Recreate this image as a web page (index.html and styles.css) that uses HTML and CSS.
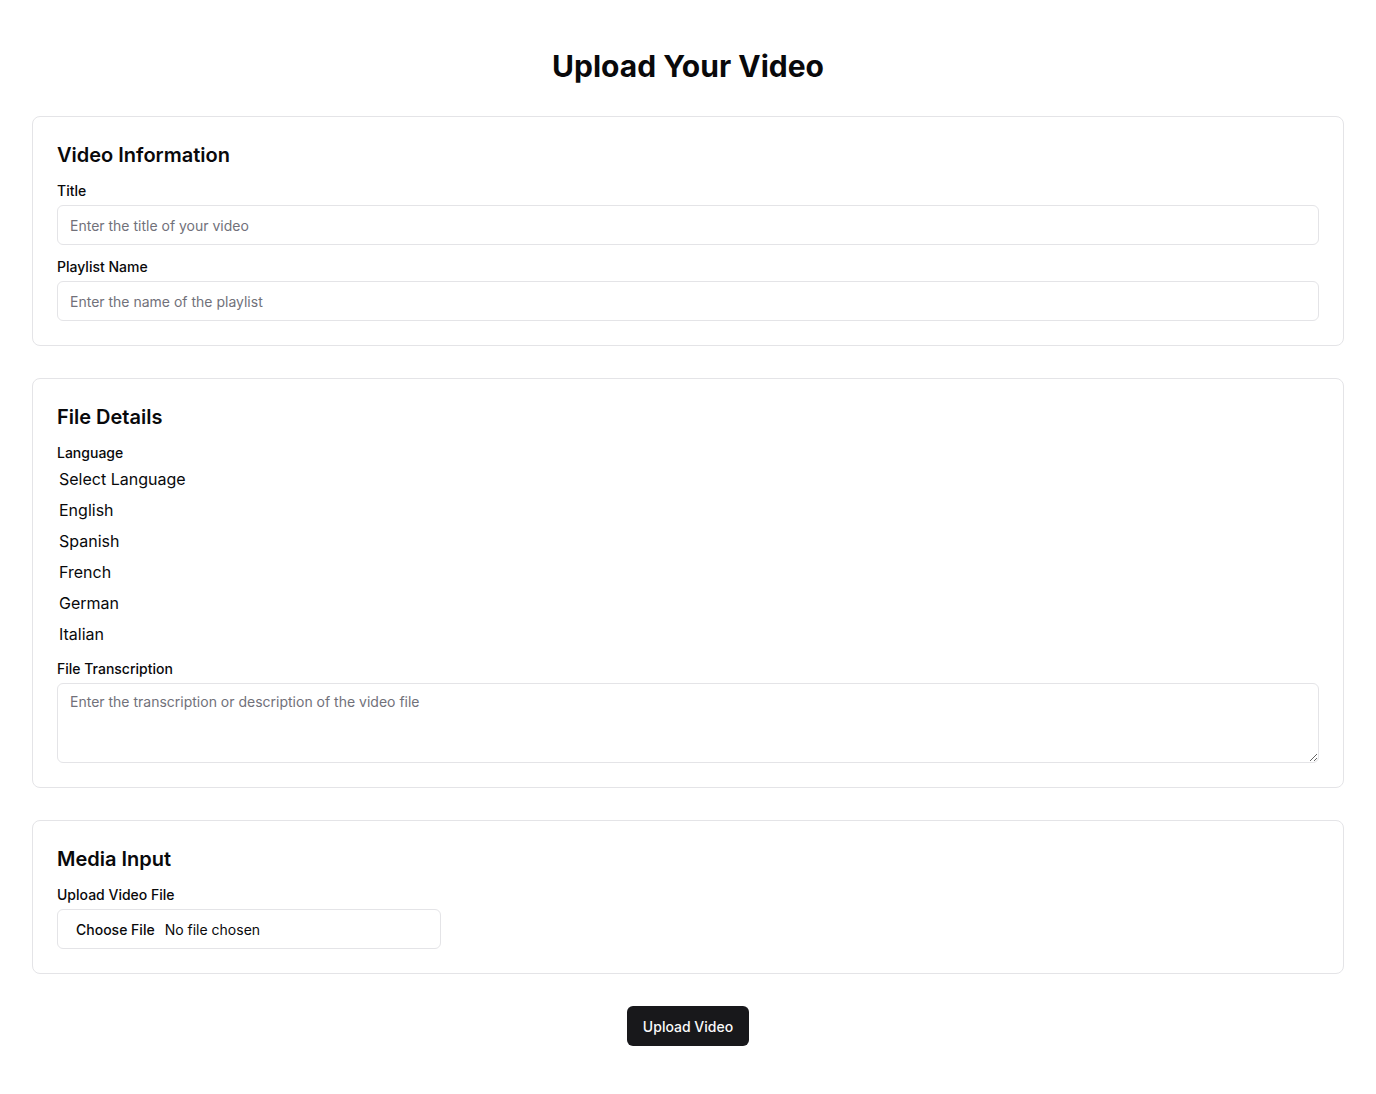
FILE: index.html
```html
<!DOCTYPE html>
<html lang="en">
<head>
<meta charset="utf-8">
<title>Upload Your Video</title>
<link rel="stylesheet" href="styles.css">
</head>
<body>
<main class="page">
  <h1 class="page-title">Upload Your Video</h1>
  <form class="form">
    <section class="card">
      <h2 class="card-title">Video Information</h2>
      <div class="field">
        <label class="label" for="title">Title</label>
        <input class="input" id="title" type="text" placeholder="Enter the title of your video">
      </div>
      <div class="field">
        <label class="label" for="playlist">Playlist Name</label>
        <input class="input" id="playlist" type="text" placeholder="Enter the name of the playlist">
      </div>
    </section>

    <section class="card">
      <h2 class="card-title">File Details</h2>
      <div class="field">
        <label class="label">Language</label>
        <div class="options">
          <div class="option">Select Language</div>
          <div class="option">English</div>
          <div class="option">Spanish</div>
          <div class="option">French</div>
          <div class="option">German</div>
          <div class="option">Italian</div>
        </div>
      </div>
      <div class="field">
        <label class="label" for="transcription">File Transcription</label>
        <textarea class="textarea" id="transcription" placeholder="Enter the transcription or description of the video file"></textarea>
      </div>
    </section>

    <section class="card">
      <h2 class="card-title">Media Input</h2>
      <div class="field">
        <label class="label">Upload Video File</label>
        <div class="file">
          <span class="file-btn">Choose File</span>
          <span class="file-name">No file chosen</span>
        </div>
      </div>
    </section>

    <div class="actions">
      <button type="button" class="submit">Upload Video</button>
    </div>
  </form>
</main>
</body>
</html>
```
FILE: styles.css
```css
* { box-sizing: border-box; }
html, body { margin: 0; padding: 0; background: #ffffff; }
body {
  font-family: Inter, "Noto Sans", sans-serif;
  color: #09090b;
}
.page {
  padding: 48px 32px 32px;
}
.page-title {
  margin: 0 0 32px;
  text-align: center;
  font-size: 30px;
  line-height: 36px;
  font-weight: 700;
  color: #09090b;
}
.form {
  display: flex;
  flex-direction: column;
  gap: 32px;
}
.card {
  border: 1px solid #e4e4e7;
  border-radius: 8px;
  padding: 24px;
  display: flex;
  flex-direction: column;
  gap: 12px;
}
.card-title {
  margin: 0;
  font-size: 20px;
  line-height: 28px;
  font-weight: 600;
}
.field {
  display: flex;
  flex-direction: column;
  gap: 4px;
}
.label {
  font-size: 14px;
  line-height: 20px;
  font-weight: 500;
  color: #09090b;
}
.input, .textarea {
  width: 100%;
  border: 1px solid #e4e4e7;
  border-radius: 6px;
  padding: 8px 12px;
  font-family: Inter, "Noto Sans", sans-serif;
  font-size: 14px;
  line-height: 22px;
  color: #09090b;
  background: #fff;
  outline: none;
}
.input { height: 40px; }
.textarea { height: 80px; line-height: 20px; resize: vertical; display: block; }
.input::placeholder, .textarea::placeholder { color: #71717a; }
.options {
  display: flex;
  flex-direction: column;
  padding: 0 2px;
  margin: -3px 0 -3px;
}
.option {
  font-size: 16px;
  line-height: 31px;
  height: 31px;
  color: #09090b;
}
.file {
  width: 384px;
  height: 40px;
  border: 1px solid #e4e4e7;
  border-radius: 6px;
  display: flex;
  align-items: center;
  padding: 0 18px;
  font-family: Inter, "Noto Sans", sans-serif;
  font-size: 14px;
  color: #09090b;
}
.file-btn {
  font-weight: 500;
  margin-right: 10px;
}
.actions {
  display: flex;
  justify-content: center;
}
.submit {
  height: 40px;
  padding: 0 16px;
  border: none;
  border-radius: 6px;
  background: #18181b;
  color: #fafafa;
  font-family: Inter, "Noto Sans", sans-serif;
  font-size: 14px;
  font-weight: 500;
  cursor: pointer;
}
```
